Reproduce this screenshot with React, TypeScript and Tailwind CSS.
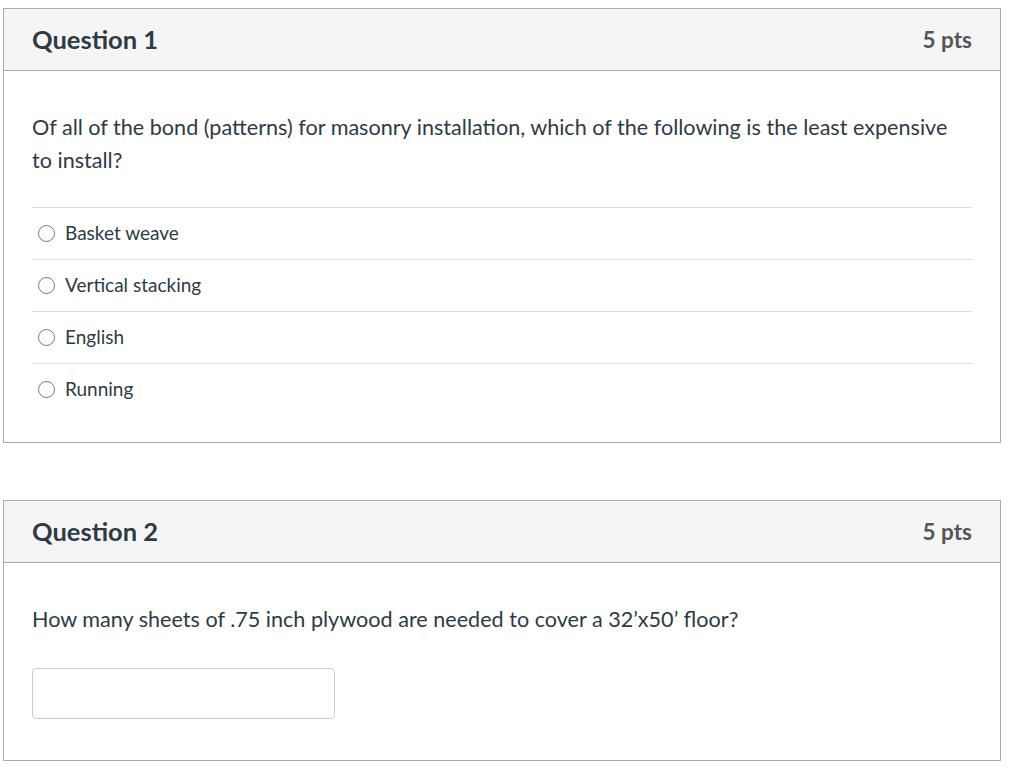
export default function App() {
  const answers = ["Basket weave", "Vertical stacking", "English", "Running"];
  return (
    <div className="min-h-screen bg-white pt-[8px] pl-[3px] text-[#2d3b45]" style={{ fontFamily: "Lato, 'Noto Sans', sans-serif" }}>
      {/* Question 1 */}
      <div className="w-[998px] border border-[#aaaaaa]">
        <div className="flex h-[62px] items-center justify-between border-b border-[#aaaaaa] bg-[#f5f5f5] px-[28px]">
          <h2 className="text-[25.5px] font-bold">Question 1</h2>
          <span className="text-[22.5px] font-bold text-[#555555]">5 pts</span>
        </div>
        <div className="px-[28px] pt-[40px] pb-[27px]">
          <p className="text-[21.6px] leading-[33px]">
            Of all of the bond (patterns) for masonry installation, which of the following is the least expensive to install?
          </p>
          <div className="mt-[30px]">
            {answers.map((a) => (
              <div key={a} className="flex h-[52px] items-center gap-[10px] border-t border-[#dddddd] pl-[6px]">
                <span className="h-[17px] w-[17px] shrink-0 rounded-full border border-[#777777] bg-white" />
                <span className="text-[19px]">{a}</span>
              </div>
            ))}
          </div>
        </div>
      </div>

      {/* Question 2 */}
      <div className="mt-[57px] w-[998px] border border-[#aaaaaa]">
        <div className="flex h-[62px] items-center justify-between border-b border-[#aaaaaa] bg-[#f5f5f5] px-[28px]">
          <h2 className="text-[25.5px] font-bold">Question 2</h2>
          <span className="text-[22.5px] font-bold text-[#555555]">5 pts</span>
        </div>
        <div className="px-[28px] pt-[40px] pb-[41px]">
          <p className="text-[21.6px] leading-[33px]">
            How many sheets of .75 inch plywood are needed to cover a 32’x50’ floor?
          </p>
          <input type="text" className="mt-[32px] block h-[51px] w-[303px] rounded-[4px] border border-[#cccccc] bg-white px-2 outline-none" />
        </div>
      </div>
    </div>
  );
}
